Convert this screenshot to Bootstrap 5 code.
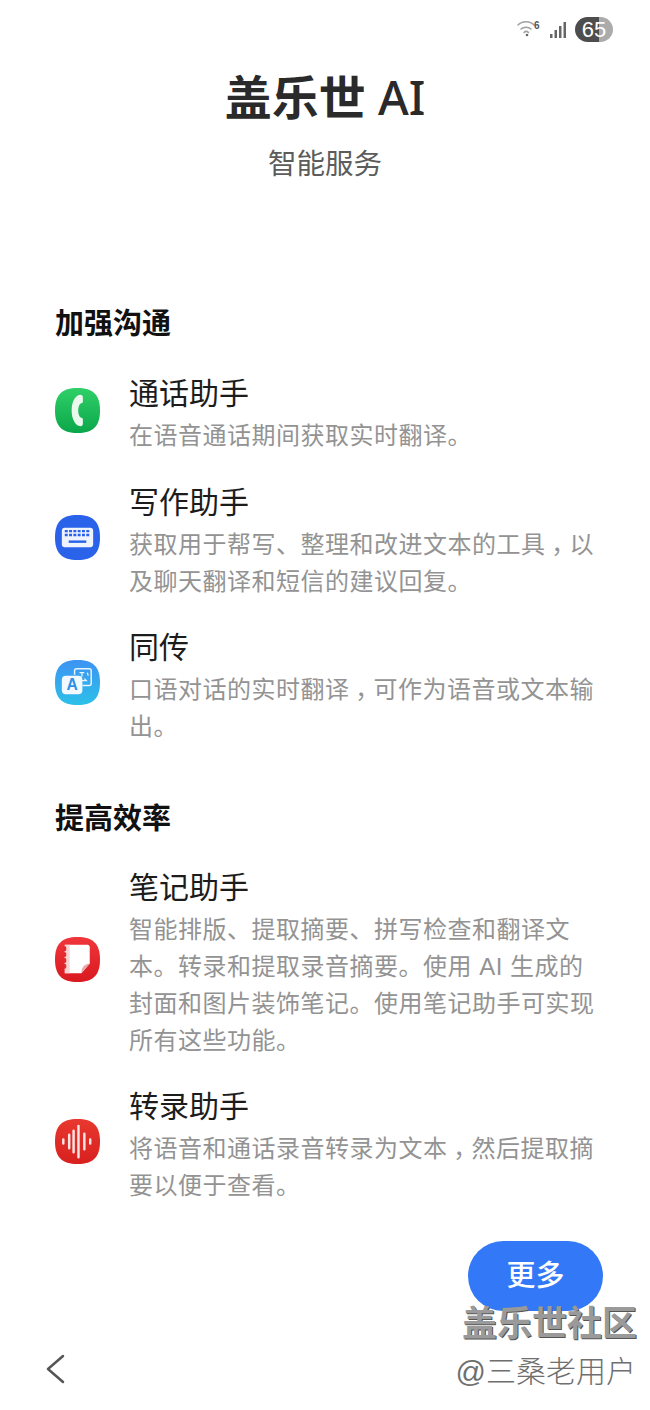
<!DOCTYPE html>
<html lang="zh">
<head>
<meta charset="UTF-8">
<title>盖乐世 AI</title>
<link href="https://cdn.jsdelivr.net/npm/bootstrap@5.3.0/dist/css/bootstrap.min.css" rel="stylesheet">
<style>
body { font-family: "Liberation Sans", "Noto Sans CJK SC", sans-serif; width: 650px; height: 1410px; overflow: hidden; background: #fff; color: #111; position: relative; }
.status-row { height: 60px; padding: 17px 37px 0 0; }
.batt { width: 38px; height: 25px; border-radius: 13px; background: linear-gradient(90deg, #4d4d4d 0 64%, #ababab 64%); color: #fff; font-size: 22px; line-height: 25px; text-align: center; margin-left: 9px; }
.app-title { font-family: "Noto Sans", "Noto Sans CJK SC", sans-serif; font-size: 47px; line-height: 70px; font-weight: 700; margin: 2px 0 0; color: #2a2a2a; }
.app-title span { font-weight: 500; }
.app-sub { font-size: 28.5px; line-height: 40px; color: #5c5c5c; margin-top: 12px; }
.sect-title { font-size: 29px; line-height: 40px; font-weight: 700; margin: 0; color: #111; }
.sect-one { margin-top: 120px; }
.sect-two { margin-top: 54px; margin-bottom: 29px; }
.page-pad { padding: 0 55px; }
.feat { gap: 29px; margin-top: 28px; }
.sect-one + .feat { margin-top: 30px; }
.sect-one + .feat + .feat { margin-top: 29px; }
.sect-two + .feat { margin-top: 0; }
.feat-ico { width: 45px; height: 45px; flex: none; margin-bottom: 8px; }
.feat-name { font-size: 30px; line-height: 40px; color: #1c1c1c; }
.feat-desc { font-size: 24px; letter-spacing: .5px; line-height: 37px; color: #939393; margin-top: 3px; width: 470px; }
.mid-punct { display: inline-block; width: 1em; text-align: center; font-feature-settings: "halt"; }
.more-btn { position: absolute; left: 468px; top: 1241px; width: 135px; height: 70px; border-radius: 35px; background: #3378f6; color: #fff; font-size: 29px; font-weight: 500; line-height: 70px; text-align: center; border: 0; padding: 0; }
.mark-a { position: absolute; right: 13px; top: 1301px; font-size: 35px; line-height: 46px; font-weight: 700; color: #9a9a9a; text-shadow: 1px 1px 0 #555; }
.mark-b { position: absolute; right: 14px; top: 1352px; font-size: 30px; line-height: 40px; font-weight: 300; color: #6f6f6f; }
.back-ico { position: absolute; left: 44px; top: 1353px; }
</style>
</head>
<body>
<div class="status-row d-flex justify-content-end align-items-start">
    <svg width="30" height="24" viewBox="0 0 30 24" fill="none" stroke="#a0a0a0" stroke-width="1.500" stroke-linecap="round">
        <path d="M2 8C6 3.500 14 3.500 18 8"/><path d="M5 12C7.500 9.500 12.500 9.500 15 12"/><path d="M8 15.500C9.500 14 11 14 12.500 15.500"/>
        <circle cx="11" cy="18" r="1.300" fill="#666" stroke="none"/>
        <text x="18" y="12" font-size="10" font-weight="700" fill="#555" stroke="none" font-family="Liberation Sans">6</text>
    </svg>
    <svg width="20" height="24" viewBox="0 0 20 24" fill="#666">
        <rect x="4" y="17" width="2.500" height="4"/><rect x="8.500" y="13" width="2.500" height="8"/><rect x="13" y="9" width="2.500" height="12"/><rect x="17.500" y="5" width="2.500" height="16"/>
    </svg>
    <div class="batt">65</div>
</div>

<div class="text-center">
    <h1 class="app-title">盖乐世 <span>AI</span></h1>
    <div class="app-sub">智能服务</div>
</div>

<div class="page-pad">
    <h2 class="sect-title sect-one">加强沟通</h2>

    <div class="feat d-flex align-items-center">
        <svg class="feat-ico" viewBox="0 0 46 46">
            <defs><linearGradient id="g1" x1="0" y1="0" x2="0" y2="1"><stop offset="0" stop-color="#2fd068"/><stop offset="1" stop-color="#0ba64a"/></linearGradient></defs>
            <path d="M23 0C39 0 46 7 46 23S39 46 23 46 0 39 0 23 7 0 23 0Z" fill="url(#g1)"/>
            <path d="M26 7c1.500 0 2.500 1 2.500 2.500v4c0 1.500-1 2.300-2.300 2.300-1.500 1-2.500 4-2.500 7.200s1 6.200 2.500 7.200c1.300 0 2.300.8 2.300 2.300v4c0 1.500-1 2.500-2.500 2.500-5 0-9-7-9-16S21 7 26 7Z" fill="#eaf8ee"/>
        </svg>
        <div>
            <div class="feat-name">通话助手</div>
            <div class="feat-desc">在语音通话期间获取实时翻译。</div>
        </div>
    </div>

    <div class="feat d-flex align-items-center">
        <svg class="feat-ico" viewBox="0 0 46 46">
            <path d="M23 0C39 0 46 7 46 23S39 46 23 46 0 39 0 23 7 0 23 0Z" fill="#2b62ea"/>
            <rect x="7" y="13" width="32" height="20" rx="3" fill="#eef3fe"/>
            <path d="M10 16.500h26M10 20.500h26" stroke="#2b62ea" stroke-width="2.500" stroke-dasharray="3 1.400"/>
            <rect x="14" y="26" width="18" height="2.500" fill="#2b62ea"/>
        </svg>
        <div>
            <div class="feat-name">写作助手</div>
            <div class="feat-desc">获取用于帮写、整理和改进文本的工具<span class="mid-punct">，</span>以<br>及聊天翻译和短信的建议回复。</div>
        </div>
    </div>

    <div class="feat d-flex align-items-center">
        <svg class="feat-ico" viewBox="0 0 46 46">
            <defs><linearGradient id="g3" x1="0" y1="0" x2="0" y2="1"><stop offset="0" stop-color="#3e93f3"/><stop offset="1" stop-color="#2cc0e8"/></linearGradient></defs>
            <path d="M23 0C39 0 46 7 46 23S39 46 23 46 0 39 0 23 7 0 23 0Z" fill="url(#g3)"/>
            <path d="M20 15v-4c0-1 .8-2 2-2h13c1.200 0 2 1 2 2v13c0 1.200-.8 2-2 2h-7" fill="none" stroke="#e8f4fe" stroke-width="1.500"/>
            <path d="M25 13h5M27.500 13v4M26 21h6l-2-2M33 13l1 3" fill="none" stroke="#e8f4fe" stroke-width="1.300"/>
            <rect x="7" y="16" width="21" height="19" rx="4" fill="#f2f9fe"/>
            <text x="17.500" y="31" text-anchor="middle" font-size="16" font-weight="700" fill="#2f8fe6" font-family="Liberation Sans">A</text>
        </svg>
        <div>
            <div class="feat-name">同传</div>
            <div class="feat-desc">口语对话的实时翻译<span class="mid-punct">，</span>可作为语音或文本输<br>出。</div>
        </div>
    </div>

    <h2 class="sect-title sect-two">提高效率</h2>

    <div class="feat d-flex align-items-center">
        <svg class="feat-ico" viewBox="0 0 46 46">
            <defs><linearGradient id="g4" x1="0" y1="0" x2="0" y2="1"><stop offset="0" stop-color="#f0373c"/><stop offset="1" stop-color="#d9191f"/></linearGradient></defs>
            <path d="M23 0C39 0 46 7 46 23S39 46 23 46 0 39 0 23 7 0 23 0Z" fill="url(#g4)"/>
            <path d="M10 8h23c1.500 0 2.500 1 2.500 2.500V27L27 37H10Z" fill="#fff"/>
            <path d="M10 8h5v29h-5Z" fill="#f6d4d4"/>
            <path d="M27 37c0-6 3-9.500 8.500-10Z" fill="#e9a9a9"/>
            <path d="M10 11v2M10 17v2M10 23v2M10 29v2" stroke="#e32a2f" stroke-width="3" stroke-linecap="round"/>
        </svg>
        <div>
            <div class="feat-name">笔记助手</div>
            <div class="feat-desc">智能排版、提取摘要、拼写检查和翻译文本。转录和提取录音摘要。使用 AI 生成的封面和图片装饰笔记。使用笔记助手可实现所有这些功能。</div>
        </div>
    </div>

    <div class="feat d-flex align-items-center">
        <svg class="feat-ico" viewBox="0 0 46 46">
            <defs><linearGradient id="g5" x1="0" y1="0" x2="0" y2="1"><stop offset="0" stop-color="#e8382f"/><stop offset="1" stop-color="#d8201f"/></linearGradient></defs>
            <path d="M23 0C39 0 46 7 46 23S39 46 23 46 0 39 0 23 7 0 23 0Z" fill="url(#g5)"/>
            <path d="M8.500 21v4M14.500 16v14M19 12v22M24 7v32M30 15v16M36 21v4" stroke="#fbe6e4" stroke-width="2.500" stroke-linecap="round"/>
        </svg>
        <div>
            <div class="feat-name">转录助手</div>
            <div class="feat-desc">将语音和通话录音转录为文本<span class="mid-punct">，</span>然后提取摘<br>要以便于查看。</div>
        </div>
    </div>
</div>

<button class="more-btn">更多</button>
<div class="mark-a">盖乐世社区</div>
<div class="mark-b">@三桑老用户</div>
<svg class="back-ico" width="24" height="32" viewBox="0 0 24 32" fill="none" stroke="#555" stroke-width="2.500" stroke-linecap="round" stroke-linejoin="round"><path d="M19 3 4 16l15 13"/></svg>
<script src="https://cdn.jsdelivr.net/npm/bootstrap@5.3.0/dist/js/bootstrap.bundle.min.js"></script>
</body>
</html>
